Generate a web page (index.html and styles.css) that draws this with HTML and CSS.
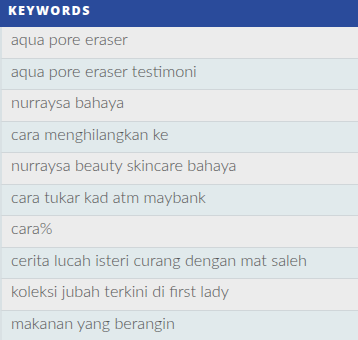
FILE: index.html
```html
<!DOCTYPE html>
<html>
<head>
<meta charset="utf-8">
<link rel="stylesheet" href="styles.css">
</head>
<body>
<div class="panel">
  <div class="head">KEYWORDS</div>
  <ul class="list">
    <li class="row">aqua pore eraser</li>
    <li class="row">aqua pore eraser testimoni</li>
    <li class="row">nurraysa bahaya</li>
    <li class="row">cara menghilangkan ke</li>
    <li class="row">nurraysa beauty skincare bahaya</li>
    <li class="row">cara tukar kad atm maybank</li>
    <li class="row">cara%</li>
    <li class="row">cerita lucah isteri curang dengan mat saleh</li>
    <li class="row">koleksi jubah terkini di first lady</li>
    <li class="row">makanan yang berangin</li>
  </ul>
</div>
</body>
</html>
```
FILE: styles.css
```css
html, body {
  margin: 0;
  padding: 0;
  background: #ffffff;
}
.panel {
  width: 358px;
}
.head {
  height: 27px;
  box-sizing: border-box;
  background: #2a4b9b;
  color: #ffffff;
  font-family: "Open Sans", sans-serif;
  font-weight: 800;
  font-size: 12.5px;
  letter-spacing: 1.4px;
  line-height: 22px;
  padding-left: 8px;
}
.list {
  list-style: none;
  margin: 0;
  padding: 0;
}
.row {
  height: 31.5px;
  box-sizing: border-box;
  border-left: 2px solid #d9e1e4;
  border-bottom: 1.5px solid #d0d6d9;
  background: #ececec;
  color: #555555;
  font-family: "Lato", sans-serif;
  font-weight: 300;
  font-size: 16.2px;
  line-height: 24px;
  padding-left: 9px;
  white-space: nowrap;
}
.row:nth-child(even) {
  background: #e1eaec;
}
```
